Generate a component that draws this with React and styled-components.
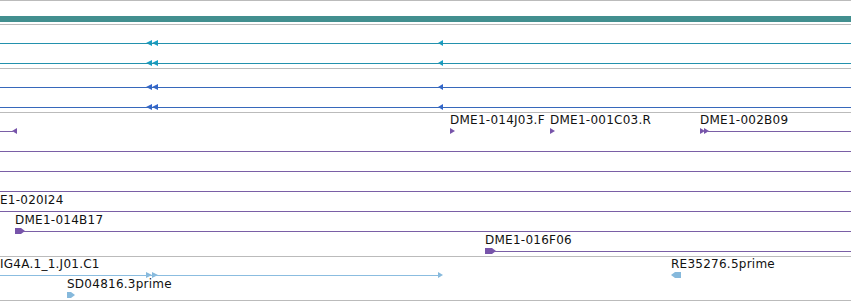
import React from 'react'
import styled, {createGlobalStyle} from 'styled-components'

const GlobalStyle = createGlobalStyle`
  body {
    margin: 0;
    background: #fff;
    font-family: "DejaVu Sans", "Liberation Sans", sans-serif;
  }
`

const W = 851

const Browser = styled.div`
  width: ${W}px;
  overflow: hidden;
  border-top: 1px solid #bbb;
  display: flex;
  flex-direction: column;
`

const Track = styled.section`
  position: relative;
  display: flex;
  flex-direction: column;
  border-bottom: 1px solid #bbb;
  padding-bottom: ${p => (p.$ruler ? 0 : 3)}px;
  overflow: hidden;
`

const Ruler = styled.div`
  height: 23px;
  display: flex;
  flex-direction: column;
  justify-content: flex-end;
`

const RulerBar = styled.div`
  height: 6px;
  margin-bottom: 2px;
  background: #428f8f;
`

// one feature lane; the optional $line is the feature's span drawn at y=18
const Row = styled.div`
  position: relative;
  height: 20px;
  &::after {
    content: '';
    display: ${p => (p.$line ? 'block' : 'none')};
    position: absolute;
    top: 18px;
    left: ${p => p.$from || 0}px;
    right: ${p => W - (p.$to ?? W)}px;
    height: 1px;
    background: ${p => p.$line};
  }
`

const Line = styled.div`
  position: absolute;
  top: 18px;
  left: ${p => p.$from}px;
  width: ${p => p.$to - p.$from}px;
  height: 1px;
  background: ${p => p.$color};
`

const Label = styled.div`
  position: absolute;
  top: 0;
  left: ${p => p.$x}px;
  font-size: 12px;
  line-height: 14px;
  letter-spacing: 0.25px;
  color: #111;
  white-space: nowrap;
`

const GlyphBox = styled.svg`
  position: absolute;
  left: ${p => p.$x}px;
  top: ${p => 18 - Math.floor(p.$h / 2)}px;
  overflow: visible;
`

const Glyph = ({x, w = 6, h = 6, dir = 'left', kind = 'tri', color}) => {
  const m = h / 2
  let d
  if (kind === 'block') {
    const body = w - 4
    d = dir === 'right'
      ? `M0 0 H${body} L${w} ${m} L${body} ${h} H0 Z`
      : `M${w} 0 H4 L0 ${m} L4 ${h} H${w} Z`
  } else {
    d = dir === 'right'
      ? `M0 0 L${w} ${m} L0 ${h} Z`
      : `M${w} 0 L0 ${m} L${w} ${h} Z`
  }
  return (
    <GlyphBox $x={x} $h={h} width={w} height={h} viewBox={`0 0 ${w} ${h}`}>
      <path d={d} fill={color} />
    </GlyphBox>
  )
}

const CYAN = {line: '#2391ad', mark: '#18a0c6'}
const BLUE = {line: '#3768bb', mark: '#3366cc'}
const PURPLE = {line: '#7a5fa6', mark: '#7754aa'}
const SKY = {line: '#8bbde0', mark: '#86b9dc'}

const StrandRow = ({c}) => (
  <Row $line={c.line}>
    <Glyph x={146} w={6} color={c.mark} />
    <Glyph x={152} w={6} color={c.mark} />
    <Glyph x={438} w={5} color={c.mark} />
  </Row>
)

export default function App() {
  return (
    <>
      <GlobalStyle />
      <Browser>
        <Track $ruler>
          <Ruler><RulerBar /></Ruler>
        </Track>

        <Track>
          <StrandRow c={CYAN} />
          <StrandRow c={CYAN} />
        </Track>

        <Track>
          <StrandRow c={BLUE} />
          <StrandRow c={BLUE} />
        </Track>

        <Track>
          <Row $line={PURPLE.line} $to={13}>
            <Glyph x={12} w={5} h={6} color={PURPLE.mark} />
            <Label $x={450}>DME1-014J03.F</Label>
            <Glyph x={450} w={5} h={6} dir="right" color={PURPLE.mark} />
            <Label $x={550}>DME1-001C03.R</Label>
            <Glyph x={550} w={5} h={6} dir="right" color={PURPLE.mark} />
            <Label $x={700}>DME1-002B09</Label>
            <Glyph x={700} w={5} h={6} dir="right" color={PURPLE.mark} />
            <Glyph x={704} w={5} h={6} dir="right" color={PURPLE.mark} />
            <Line $from={708} $to={W} $color={PURPLE.line} />
          </Row>
          <Row $line={PURPLE.line} />
          <Row $line={PURPLE.line} />
          <Row $line={PURPLE.line} />
          <Row $line={PURPLE.line}>
            <Label $x={0}>E1-020I24</Label>
          </Row>
          <Row $line={PURPLE.line} $from={24}>
            <Label $x={15}>DME1-014B17</Label>
            <Glyph x={15} w={10} h={6} kind="block" dir="right" color={PURPLE.mark} />
          </Row>
          <Row $line={PURPLE.line} $from={495}>
            <Label $x={485}>DME1-016F06</Label>
            <Glyph x={485} w={11} h={6} kind="block" dir="right" color={PURPLE.mark} />
          </Row>
        </Track>

        <Track>
          <Row $line={SKY.line} $to={440}>
            <Label $x={0}>IG4A.1_1.J01.C1</Label>
            <Glyph x={146} w={6} dir="right" color={SKY.mark} />
            <Glyph x={152} w={6} dir="right" color={SKY.mark} />
            <Glyph x={438} w={5} dir="right" color={SKY.mark} />
            <Label $x={671}>RE35276.5prime</Label>
            <Glyph x={671} w={10} h={6} kind="block" color={SKY.mark} />
          </Row>
          <Row>
            <Label $x={67}>SD04816.3prime</Label>
            <Glyph x={67} w={8} h={6} kind="block" dir="right" color={SKY.mark} />
          </Row>
        </Track>
      </Browser>
    </>
  )
}
